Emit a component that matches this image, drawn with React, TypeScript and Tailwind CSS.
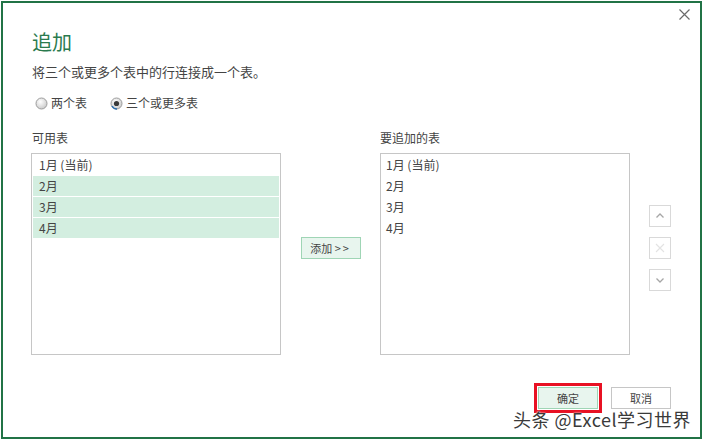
import React from "react";

const font = { fontFamily: '"Noto Sans CJK SC", "Liberation Sans", sans-serif' };

function Radio({ checked }: { checked?: boolean }) {
  return (
    <svg width="13" height="13" viewBox="0 0 13 13" className="shrink-0">
      <defs>
        <radialGradient id={checked ? "rg1" : "rg0"} cx="40%" cy="35%" r="70%">
          <stop offset="0%" stopColor="#ffffff" />
          <stop offset="100%" stopColor="#c8c8c8" />
        </radialGradient>
      </defs>
      <circle cx="6.5" cy="6.5" r="5.5" fill={`url(#${checked ? "rg1" : "rg0"})`} stroke="#9c9c9c" />
      {checked && <path d="M2 9 A5.5 5.5 0 0 0 7 12" stroke="#2a6fb0" strokeWidth="1.4" fill="none" />}
      {checked && <circle cx="6.5" cy="6.5" r="2.6" fill="#3a3a3a" />}
    </svg>
  );
}

function SideButton({ kind }: { kind: "up" | "x" | "down" }) {
  return (
    <div className="flex h-[22px] w-[22px] items-center justify-center border border-[#d9d9d9] bg-white">
      <svg width="10" height="10" viewBox="0 0 10 10">
        {kind === "up" && <path d="M1.5 6.5 L5 3 L8.5 6.5" stroke="#a6a6a6" strokeWidth="1.3" fill="none" />}
        {kind === "down" && <path d="M1.5 3.5 L5 7 L8.5 3.5" stroke="#a6a6a6" strokeWidth="1.3" fill="none" />}
        {kind === "x" && <path d="M1 1 L9 9 M9 1 L1 9" stroke="#e3e3e3" strokeWidth="1.1" fill="none" />}
      </svg>
    </div>
  );
}

const months = ["1月 (当前)", "2月", "3月", "4月"];

export default function App() {
  return (
    <div className="relative h-[440px] w-[703px] bg-white p-px text-[#444]" style={font}>
      <div className="flex h-[438px] w-[701px] flex-col border-2 border-[#217346] pl-[28px] pt-[6px]">
        <div className="flex h-[10px] justify-end pr-[10px]">
          <svg width="11" height="11" viewBox="0 0 11 11">
            <path d="M0.5 0.5 L10.5 10.5 M10.5 0.5 L0.5 10.5" stroke="#6a6a6a" strokeWidth="1.2" fill="none" />
          </svg>
        </div>

        <h1 className="mt-[9px] ml-px text-[20px] leading-[28px] text-[#2a7a4e]">追加</h1>
        <p className="mt-[6px] ml-px text-[13px] leading-[20px]">将三个或更多个表中的行连接成一个表。</p>

        <div className="mt-[11px] flex h-[20px] items-center pl-[4px] text-[12px]">
          <Radio />
          <span className="ml-[3px]">两个表</span>
          <span className="ml-[23px]">
            <Radio checked />
          </span>
          <span className="ml-[3px]">三个或更多表</span>
        </div>

        <div className="mt-[15px] flex text-[12px]">
          <div className="w-[250px]">
            <div className="ml-px leading-[20px]">可用表</div>
            <div className="mt-[5px] h-[202px] border border-[#c6c6c6] p-px">
              {months.map((m, i) => (
                <div
                  key={m}
                  className={`mb-px h-[20px] px-[6px] leading-[20px] ${i > 0 ? "bg-[#d3eee0]" : ""}`}
                >
                  {m}
                </div>
              ))}
            </div>
          </div>

          <div className="flex w-[99px] justify-center pt-[109px]">
            <button className="h-[22px] w-[60px] border border-[#9fd5b5] bg-[#e8f5ee] text-[11px] leading-[20px] text-[#444]">
              添加 <span className="tracking-[2px]">&gt;&gt;</span>
            </button>
          </div>

          <div className="w-[250px]">
            <div className="leading-[20px]">要追加的表</div>
            <div className="mt-[5px] h-[202px] border border-[#c6c6c6] p-px">
              {months.map((m) => (
                <div key={m} className="mb-px h-[20px] px-[4px] leading-[20px]">
                  {m}
                </div>
              ))}
            </div>
          </div>

          <div className="ml-[19px] flex flex-col gap-[10px] pt-[77px]">
            <SideButton kind="up" />
            <SideButton kind="x" />
            <SideButton kind="down" />
          </div>
        </div>

        <div className="mt-[28px] flex items-center justify-end pr-[29px] text-[11px]">
          <div className="border-[3px] border-[#e81123] p-px">
            <button className="block h-[22px] w-[60px] border border-[#9fd5b5] bg-[#e8f5ee] leading-[20px] text-[#444]">
              确定
            </button>
          </div>
          <button className="ml-[9px] h-[22px] w-[60px] border border-[#c6c6c6] bg-white leading-[20px] text-[#444]">
            取消
          </button>
        </div>
      </div>

      <div className="absolute left-[513px] top-[410px] text-[18px] leading-[18px] tracking-[0.5px] text-[#3a3a3a] [text-shadow:0_0_2px_#fff,0_0_1px_#fff]">
        头条 @Excel学习世界
      </div>
    </div>
  );
}
